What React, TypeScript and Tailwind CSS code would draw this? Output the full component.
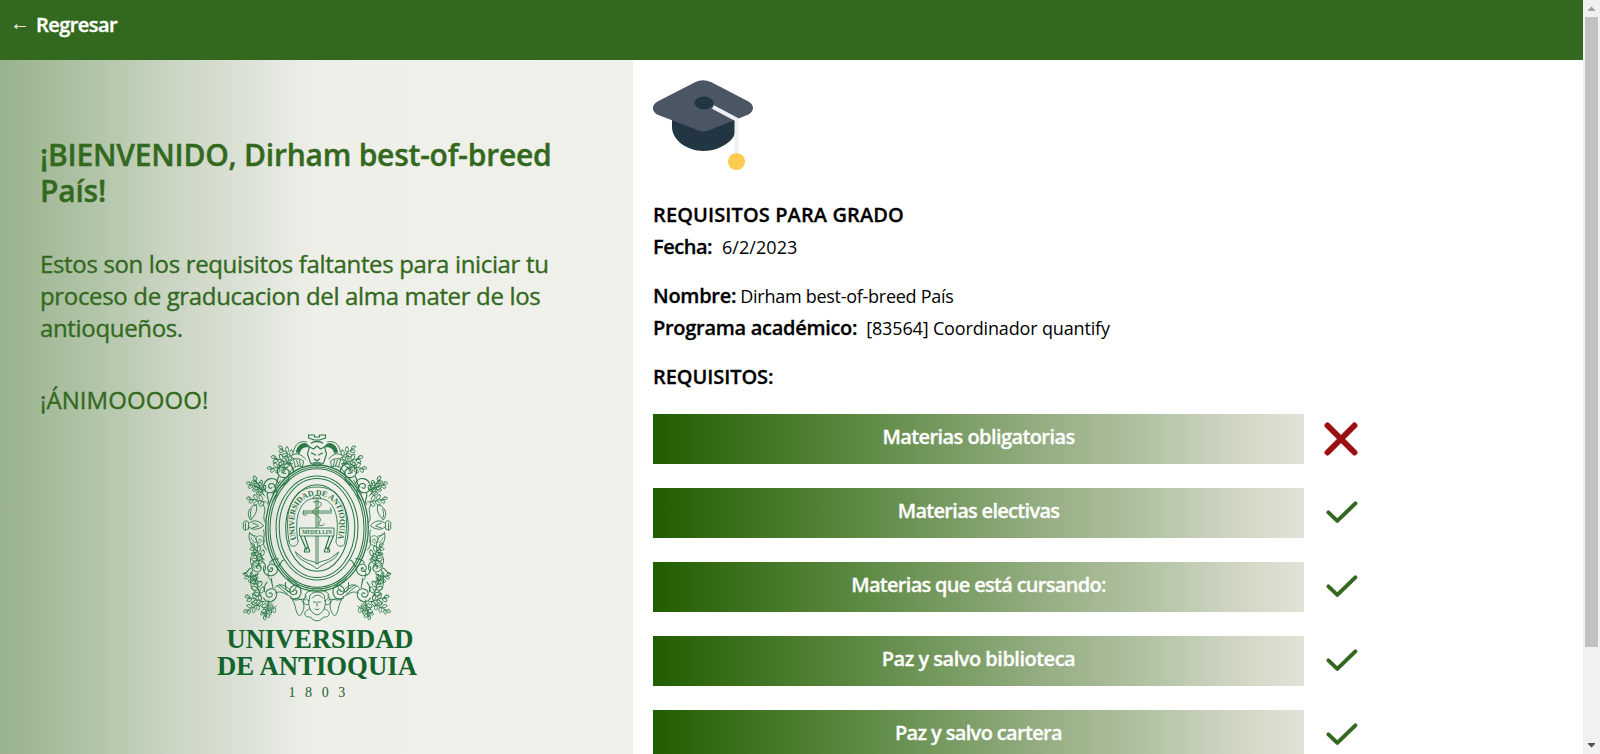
type Placement = [x: number, y: number, angle: number, scale: number];

const SPRIGS: Placement[] = [
  [294, 459, -52, 0.9],
  [292, 464, -72, 1],
  [287, 467, -95, 0.9],
  [265, 490, -70, 0.9],
  [264, 496, -30, 1],
  [266, 502, -80, 0.9],
  [264, 560, -40, 0.95],
  [260, 568, -20, 0.9],
  [260, 582, -65, 0.85],
  [261, 598, -20, 1.05],
  [265, 602, -75, 0.95],
  [260, 603, -120, 0.85],
  [268, 600, -170, 0.9],
  [276, 606, -120, 0.8],
];

const CURLS: Placement[] = [
  [284, 472, 0, 1.15],
  [270, 487, -25, 1.1],
  [271, 569, 200, 1],
  [270, 594, 150, 1],
  [294, 591, 120, 1],
  [259, 540, 90, 0.7],
  [257, 567, 30, 1],
];

function Sprig({ at: [x, y, angle, scale] }: { at: Placement }) {
  return (
    <g transform={`translate(${x} ${y}) rotate(${angle}) scale(${scale})`}>
      <path d="M0 0C-1-6 1-12 0-19" />
      <ellipse cx="-3.2" cy="-5" rx="3.2" ry="1.8" transform="rotate(35 -3.2 -5)" />
      <ellipse cx="3.2" cy="-7" rx="3.2" ry="1.8" transform="rotate(-35 3.2 -7)" />
      <ellipse cx="-3.2" cy="-11" rx="3.2" ry="1.7" transform="rotate(40 -3.2 -11)" />
      <ellipse cx="3.2" cy="-13" rx="3" ry="1.7" transform="rotate(-40 3.2 -13)" />
      <ellipse cx="-2.4" cy="-17" rx="2.6" ry="1.5" transform="rotate(50 -2.4 -17)" />
      <ellipse cx="0.6" cy="-20" rx="1.5" ry="2.6" />
    </g>
  );
}

function Curl({ at: [x, y, angle, scale] }: { at: Placement }) {
  return (
    <g transform={`translate(${x} ${y}) rotate(${angle}) scale(${scale})`}>
      <path d="M1 1C-1 2-2 0-1-2C1-4 5-2 4 2C3 6-4 6-6 1C-7-4-2-8 3-7C6-6 8-3 8 0" />
      <path d="M-5 4C-8 8-5 11-9 13M4 5C3 9 0 11-3 12" />
    </g>
  );
}

function Foliage() {
  return (
    <g>
      <g strokeWidth="0.85">
        {SPRIGS.map((at, i) => (
          <Sprig key={i} at={at} />
        ))}
      </g>
      <g strokeWidth="1">
        {CURLS.map((at, i) => (
          <Curl key={i} at={at} />
        ))}
      </g>
      {/* ribbon roll beside the crown */}
      <path d="M287 464C291 458 298 457 303 461L302 467C296 464 291 468 288 475M290 462L292 469M293 460L295 467M296 460L298 466M299 460L300 466M280 480L272 494M284 482L276 492" />
      <path d="M296 452C297 443 306 441 309 447C304 446 300 448 299 453Z" fill="#2a7846" />
      <path d="M293 452C294 444 300 440 306 442M292 455C297 452 301 455 305 459" />
      {/* side shell */}
      <path d="M254 505C246 509 247 516 250 520C254 516 257 512 256 506ZM251 509C249 513 250 517 251 519M243 526C241 521 246 519 249 523C253 519 260 521 263 526C259 529 252 531 249 527C246 532 241 530 243 526ZM249 533C247 540 251 546 257 548C258 542 255 536 249 533ZM262 504C268 510 260 516 265 523M263 530C266 537 259 542 266 550" />
      <path d="M245 523V530M248 523V529M252 523L257 525M252 528L258 526" />
      {/* lower scroll */}
      <path d="M274 588C279 582 286 585 291 592C296 590 298 583 293 580M275 593C281 590 284 594 291 597M277 586L287 594M279 585L290 593M272 582C266 578 266 570 272 568M256 552C248 556 248 564 254 568M252 570C248 580 250 590 255 592M292 600C296 605 294 612 299 616C303 612 305 606 302 601C299 598 295 598 292 600M290 598C296 603 300 597 305 600" />
    </g>
  );
}

function Emblem() {
  return (
    <svg width="212" height="280" viewBox="210.5 425 212 280" role="img" aria-label="Universidad de Antioquia 1803">
      <g fill="none" stroke="#2a7846" strokeWidth="0.9" strokeLinecap="round" strokeLinejoin="round">
        <Foliage />
        <g transform="translate(633 0) scale(-1 1)">
          <Foliage />
        </g>

        {/* crown with lion mask */}
        <path d="M308 435H314V437H319V435H325V438L319 440H314L308 438ZM309 447L307 454L310 463L316.500 466L323 463L326 454L324 447L320 449L316.500 446L313 449Z" strokeWidth="1.100" />
        <path d="M311 453L315 455M322 453L318 455M314 459L316.500 461L319 459M313 463H320M311 443C313 441 320 441 322 443" strokeWidth="1.3" />

        {/* medallion rings */}
        <g strokeWidth="1.050">
          <ellipse cx="316.5" cy="528" rx="51.300" ry="63" strokeWidth="1.300" />
          <ellipse cx="316.5" cy="528" rx="49" ry="61" />
          <ellipse cx="316.5" cy="528" rx="47" ry="59.300" />
          <ellipse cx="316.5" cy="528" rx="41" ry="52" />
          <ellipse cx="316.5" cy="528" rx="37.800" ry="49.500" />
          <ellipse cx="316.5" cy="528" rx="31.300" ry="43.300" />
        </g>

        {/* lettered arch */}
        <path d="M288.500 541C283 509 292 487 316.500 487C341 487 350 509 344.500 541C345 548 335.500 548 335.500 541C340 515 333 498 316.500 498C300 498 293 515 297.500 541C297.500 548 288 548 288.500 541Z" />
        <path id="arch" d="M296 541C289 511 299 495.500 316.500 495.500C334 495.500 344 511 337 541" stroke="none" />

        {/* anchor, cross-bar and banner */}
        <path d="M315.500 498V564M317.500 498V564M303 511H331M303 513H331M303 511C301 515 305 517 306 514M331 511L330 508M295 552C297 561 309 562 316.500 569C324 562 336 561 338 552L333 556M295 552L300 556M300 556C306 562 313 560 316.500 564C320 560 327 562 333 556" />
        <path d="M313 502C324 500 323 507 314 509C307 515 324 515 319 522C316 526 322 527 324 524M313 499C311 494 322 494 320 499" />
        <path d="M300 536L306 550M304 536L308 548M333 536L327 550M329 536L325 548M304 552C303 546 310 547 309 552ZM329 552C330 546 323 547 324 552Z" strokeWidth="1.200" />
        <path d="M299.500 528H333.500V536H299.500Z" fill="#ebeee6" />

        {/* cherub */}
        <path d="M309 598C308 590 325 590 324 598C327 606 322 614 316.500 615C311 614 306 606 309 598ZM309 601C303 599 303 592 310 591C314 587 319 587 323 591C330 592 330 599 324 601M312 598C315 594 319 594 322 598M313 602H315M318 602H320M316.500 602V606M314.500 609C316 610 317 610 318.500 609M309 609C302 611 303 618 310 617C313 622 320 622 323 617C330 618 331 611 324 609M306 596C300 600 304 607 308 604M327 596C333 600 329 607 325 604" />
      </g>

      <g fill="#2a7846" className="font-['Liberation_Serif',serif] font-bold">
        <text fontSize="8">
          <textPath href="#arch" startOffset="1" textLength="114" lengthAdjust="spacing">
            UNIVERSIDAD DE ANTIOQUIA
          </textPath>
        </text>
        <text x="301.500" y="534.400" fontSize="6.500" textLength="30" lengthAdjust="spacingAndGlyphs">MEDELLIN</text>
      </g>
      <g fill="#12632c" className="font-['Liberation_Serif',serif]">
        <text x="226" y="647.700" fontSize="27.500" fontWeight="700" textLength="187" lengthAdjust="spacingAndGlyphs">UNIVERSIDAD</text>
        <text x="216.500" y="675" fontSize="27.500" fontWeight="700" textLength="200" lengthAdjust="spacingAndGlyphs">DE ANTIOQUIA</text>
        <text x="288" y="697" fontSize="14" className="tracking-[9.6px]">1803</text>
      </g>
    </svg>
  );
}

function GraduationCap() {
  return (
    <svg width="100" height="100" viewBox="0 0 100 100" className="shrink-0">
      <path d="M19 38V52C19 65 34 76 50.500 76C67 76 82 65 82 57V38Z" fill="#213543" />
      <path d="M42.500 7Q50 3.500 58 7L95.500 26.500C101.500 30 101.500 36 95.500 39.500L58 54.500Q50.500 58.500 43 54.500L4 39.500C-1.500 36-1.500 30 4.500 26.500Z" fill="#4c5564" />
      <path d="M60 32L83.500 44.500V80" fill="none" stroke="#edf1f3" strokeWidth="4" />
      <ellipse cx="51" cy="28" rx="9.500" ry="6.500" fill="#213543" />
      <circle cx="83.500" cy="86.500" r="8.600" fill="#facd50" />
    </svg>
  );
}

function StatusIcon({ done }: { done: boolean }) {
  return (
    <svg width="40" height="40" viewBox="0 0 40 40" fill="none" strokeLinecap="round">
      {done ? (
        <path d="M7.400 19.400L16.300 27.900L34.400 10.400" stroke="#33691e" strokeWidth="4" strokeLinejoin="round" />
      ) : (
        <path d="M6.500 6.500L33.500 33.500M33.500 6.500L6.500 33.500" stroke="#9b1111" strokeWidth="5.900" />
      )}
    </svg>
  );
}

const REQUIREMENTS = [
  { label: "Materias obligatorias", done: false, tracking: "tracking-[-0.58px]" },
  { label: "Materias electivas", done: true, tracking: "tracking-[-0.7px]" },
  { label: "Materias que está cursando:", done: true, tracking: "tracking-[-0.7px]" },
  { label: "Paz y salvo biblioteca", done: true, tracking: "tracking-[-0.5px]" },
  { label: "Paz y salvo cartera", done: true, tracking: "tracking-[-0.65px]" },
];

function Scrollbar() {
  return (
    <div className="flex w-[17px] shrink-0 flex-col items-center bg-[#f1f1f1]">
      <svg width="17" height="17" viewBox="0 0 17 17" className="shrink-0">
        <path d="M5 11V10L8.500 6.500L12 10V11Z" fill="#a3a3a3" />
      </svg>
      <div className="h-[630px] w-[13px] shrink-0 bg-[#c1c1c1]" />
      <div className="flex-1" />
      <svg width="17" height="17" viewBox="0 0 17 17" className="shrink-0">
        <path d="M5 6V7L8.500 10.500L12 7V6Z" fill="#505050" />
      </svg>
    </div>
  );
}

export default function App() {
  return (
    <div className="flex h-[754px] w-[1600px] overflow-hidden bg-white font-['Open_Sans','Noto_Sans',sans-serif]">
      <div className="flex min-w-0 flex-1 flex-col">
        <header className="flex h-[60px] shrink-0 items-start gap-[7px] bg-[#33691e] pt-[11px] pl-[10px] text-xl font-semibold text-white">
          <span className="-mt-0.5 w-[19px] text-center font-['Liberation_Serif'] font-normal">←</span>
          <span className="tracking-[-0.55px] [-webkit-text-stroke:0.4px]">Regresar</span>
        </header>

        <div className="flex min-h-0 flex-1">
          <aside className="flex w-[633px] shrink-0 flex-col bg-[linear-gradient(90deg,#99b28e_0%,#b3c6aa_16%,#cbd5c3_27%,#d5dccd_34%,#e1e6dd_42%,#efefe9_50%,#f0f1ea_100%)] px-10 pt-[77px] text-[#33691e]">
            <h1 className="text-3xl/9 font-semibold tracking-[-0.23px] [-webkit-text-stroke:0.4px]">
              ¡BIENVENIDO, Dirham best-of-breed País!
            </h1>
            <p className="mt-[39px] text-2xl/8 font-medium tracking-[-0.34px] [-webkit-text-stroke:0.35px]">
              Estos son los requisitos faltantes para iniciar tu proceso de graducacion del alma mater de los antioqueños.
            </p>
            <p className="mt-10 text-2xl/8 font-medium tracking-[0.08px] [-webkit-text-stroke:0.35px]">¡ÁNIMOOOOO!</p>
            <div className="mt-[9px] flex justify-center">
              <Emblem />
            </div>
          </aside>

          <main className="flex flex-1 flex-col overflow-hidden px-5 pt-[15px] text-black">
            <GraduationCap />
            <h2 className="mt-[26px] text-xl/7 font-semibold tracking-[0.11px] [-webkit-text-stroke:0.3px]">
              REQUISITOS PARA GRADO
            </h2>
            <div className="mt-1 flex items-baseline gap-[10px]">
              <span className="text-xl/7 font-semibold tracking-[-0.48px] [-webkit-text-stroke:0.3px]">Fecha:</span>
              <span className="text-lg/7 tracking-[0.05px]">6/2/2023</span>
            </div>
            <div className="mt-[21px] flex gap-[4px]">
              <span className="text-xl/7 font-semibold tracking-[-0.26px] [-webkit-text-stroke:0.3px]">Nombre:</span>
              <span className="text-lg/7 tracking-[-0.27px]">Dirham best-of-breed País</span>
            </div>
            <div className="mt-1 flex items-baseline gap-[9px]">
              <span className="text-xl/7 font-semibold tracking-[-0.29px] [-webkit-text-stroke:0.3px]">
                Programa académico:
              </span>
              <span className="text-lg/7 tracking-[-0.15px]">[83564] Coordinador quantify</span>
            </div>
            <h2 className="mt-[21px] text-xl/7 font-semibold tracking-[-0.08px] [-webkit-text-stroke:0.3px]">
              REQUISITOS:
            </h2>

            <ul className="mt-[23px] flex flex-col gap-6">
              {REQUIREMENTS.map(({ label, done, tracking }) => (
                <li key={label} className="flex items-center gap-[17px]">
                  <div className="flex h-[50px] w-[651px] justify-center bg-[linear-gradient(90deg,#215e00_0%,#5f8b46_33%,#8ba777_55%,#b2c3a4_76%,#cdd4c0_88%,#e2e3d6_100%)] pt-[9px]">
                    <span className={`text-xl/7 font-semibold text-white [-webkit-text-stroke:0.3px] ${tracking}`}>
                      {label}
                    </span>
                  </div>
                  <StatusIcon done={done} />
                </li>
              ))}
            </ul>
          </main>
        </div>
      </div>
      <Scrollbar />
    </div>
  );
}
